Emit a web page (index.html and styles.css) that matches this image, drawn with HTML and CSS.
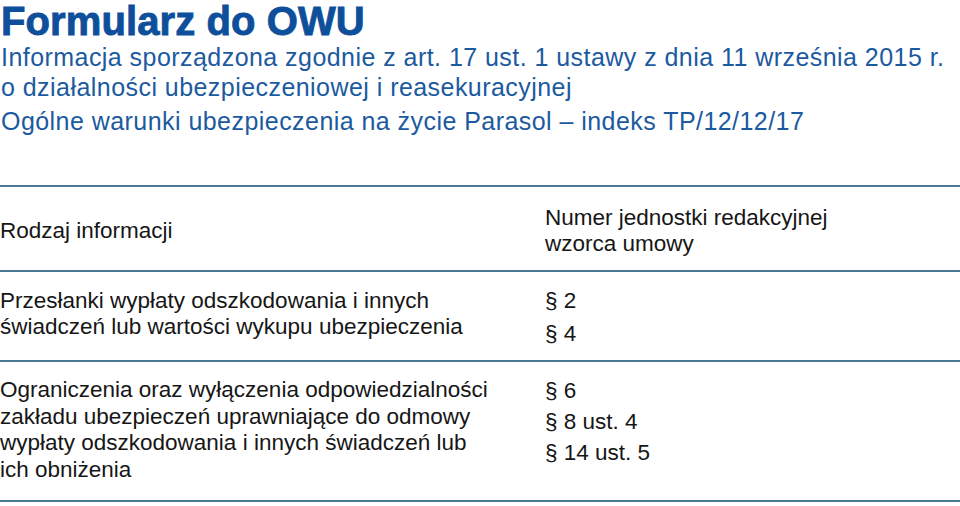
FILE: index.html
```html
<!DOCTYPE html>
<html lang="pl">
<head>
<meta charset="utf-8">
<title>Formularz do OWU</title>
<link rel="stylesheet" href="styles.css">
</head>
<body>
<header class="head">
  <h1 class="title">Formularz do OWU</h1>
  <p class="sub">Informacja sporządzona zgodnie z art. 17 ust. 1 ustawy z dnia 11 września 2015 r.<br>o działalności ubezpieczeniowej i reasekuracyjnej</p>
  <p class="sub sub-last">Ogólne warunki ubezpieczenia na życie Parasol – indeks TP/12/12/17</p>
</header>
<section class="table">
  <div class="row row-head">
    <div class="cell-left">Rodzaj informacji</div>
    <div class="cell-right">Numer jednostki redakcyjnej<br>wzorca umowy</div>
  </div>
  <div class="row row-a">
    <div class="cell-left">Przesłanki wypłaty odszkodowania i innych<br>świadczeń lub wartości wykupu ubezpieczenia</div>
    <div class="cell-right refs refs-a">
      <div>§ 2</div>
      <div>§ 4</div>
    </div>
  </div>
  <div class="row row-b">
    <div class="cell-left">Ograniczenia oraz wyłączenia odpowiedzialności<br>zakładu ubezpieczeń uprawniające do odmowy<br>wypłaty odszkodowania i innych świadczeń lub<br>ich obniżenia</div>
    <div class="cell-right refs refs-b">
      <div>§ 6</div>
      <div>§ 8 ust. 4</div>
      <div>§ 14 ust. 5</div>
    </div>
  </div>
</section>
</body>
</html>
```
FILE: styles.css
```css
html, body {
  margin: 0;
  padding: 0;
  background: #ffffff;
}
body {
  width: 960px;
  height: 506px;
  overflow: hidden;
  font-family: "Liberation Sans", Arial, sans-serif;
}
.head {
  padding-left: 1px;
}
.title {
  margin: 0;
  padding-top: 1px;
  font-size: 40px;
  line-height: 40px;
  font-weight: 700;
  color: #0d4f9b;
  -webkit-text-stroke: 0.9px #0d4f9b;
  letter-spacing: 0.1px;
}
.sub {
  margin: 0;
  font-size: 25px;
  line-height: 30px;
  color: #1c5a9f;
  letter-spacing: 0.45px;
  padding-top: 1px;
}
.sub-last {
  margin-top: 3px;
}
.table {
  margin-top: 49px;
  border-top: 2px solid #4a7794;
}
.row {
  display: grid;
  grid-template-columns: 545px 1fr;
  border-bottom: 2px solid #4a7794;
  font-size: 22.5px;
  line-height: 26px;
  color: #161616;
}
.row-head {
  align-items: center;
  padding: 18px 0 13px;
}
.row-a {
  align-items: start;
  padding: 16px 0 10px;
}
.row-b {
  align-items: start;
  padding: 15px 0 17px;
  line-height: 26.5px;
}
.refs {
  line-height: 33px;
  margin-top: -4px;
}
.refs-b {
  line-height: 31px;
  margin-top: -2px;
}
```
